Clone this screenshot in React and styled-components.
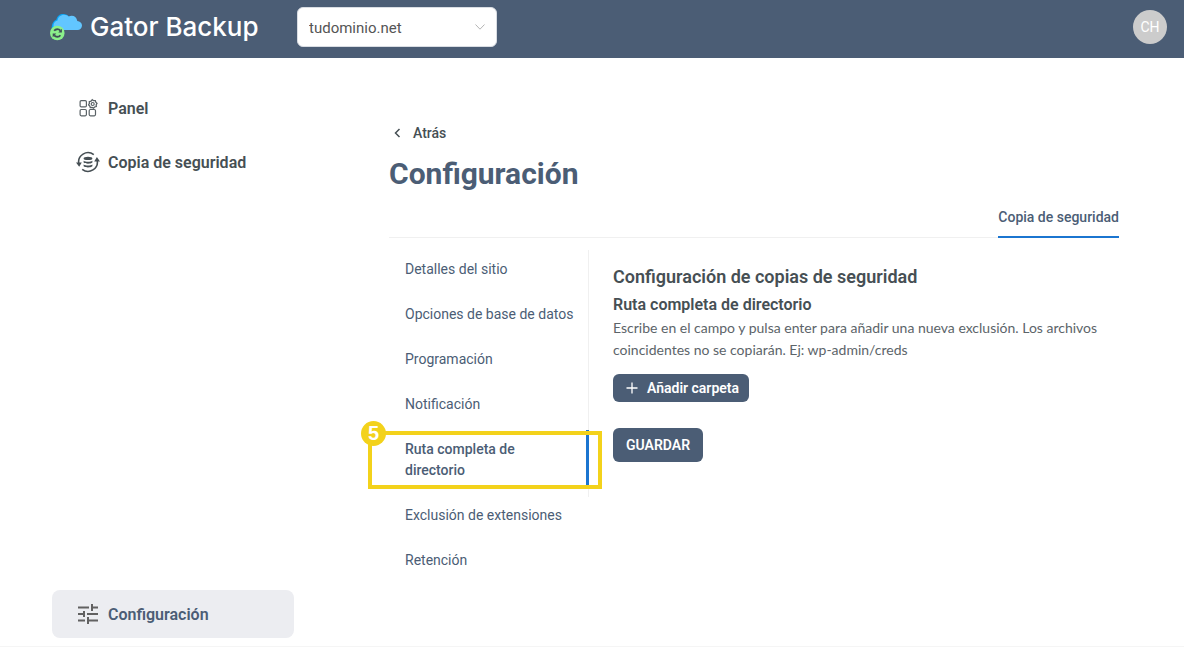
import React, { useState } from 'react'
import styled, { createGlobalStyle } from 'styled-components'

const navItems = [
    { id: 'panel', label: 'Panel', icon: <PanelIcon/> },
    { id: 'backup', label: 'Copia de seguridad', icon: <BackupIcon/> },
]

const sections = [
    'Detalles del sitio',
    'Opciones de base de datos',
    'Programación',
    'Notificación',
    'Ruta completa de directorio',
    'Exclusión de extensiones',
    'Retención',
]

function App() {
    const [section, setSection] = useState('Ruta completa de directorio');
    return (
        <Page>
            <GlobalStyle/>
            <Header>
                <Logo href="#">
                    <LogoIcon/>
                    Gator Backup
                </Logo>
                <DomainPicker>
                    <DomainSelect aria-label="Dominio">
                        <option>tudominio.net</option>
                    </DomainSelect>
                    <svg width="10" height="6" viewBox="0 0 10 6" fill="none" stroke="#b5b5b5">
                        <path d="M.5.5 5 5.200 9.500.5"/>
                    </svg>
                </DomainPicker>
                <Avatar type="button">CH</Avatar>
            </Header>
            <Body>
                <Sidebar>
                    <NavGroup>
                        {navItems.map(item => (
                            <NavLink key={item.id} href="#">{item.icon}{item.label}</NavLink>
                        ))}
                    </NavGroup>
                    <NavLink href="#" $active><TuneIcon/>Configuración</NavLink>
                </Sidebar>
                <Main>
                    <Back href="#">
                        <svg width="16" height="16" viewBox="0 0 16 16" fill="none" stroke="#464f54" strokeWidth="1.5">
                            <path d="M10.500 4 6.500 8l4 4"/>
                        </svg>
                        Atrás
                    </Back>
                    <Title>Configuración</Title>
                    <Tabs>
                        <Tab type="button">Copia de seguridad</Tab>
                    </Tabs>
                    <Columns>
                        <SectionList>
                            {sections.map(name => (
                                <SectionItem key={name}>
                                    <SectionButton type="button" $active={name===section} onClick={()=>setSection(name)}>
                                        {name}
                                    </SectionButton>
                                    {name==='Ruta completa de directorio' &&
                                        <Callout><Step>5</Step></Callout>
                                    }
                                </SectionItem>
                            ))}
                        </SectionList>
                        <Content>
                            <h2>Configuración de copias de seguridad</h2>
                            <h3>Ruta completa de directorio</h3>
                            <p>
                                Escribe en el campo y pulsa enter para añadir una nueva exclusión. Los archivos
                                coincidentes no se copiarán. Ej: wp-admin/creds
                            </p>
                            <AddButton type="button">
                                <svg width="12" height="12" viewBox="0 0 12 12" stroke="#fff" strokeWidth="1.300">
                                    <path d="M6 .5v11M.5 6h11"/>
                                </svg>
                                Añadir carpeta
                            </AddButton>
                            <SaveButton type="button">GUARDAR</SaveButton>
                        </Content>
                    </Columns>
                </Main>
            </Body>
        </Page>
    )
}

export default App

function LogoIcon() {
    return (
        <svg width="32" height="28" viewBox="0 0 32 28">
            <path d="M2 17C1 12 3 8 6.500 6.500 7 3 10 1 13 1c3 0 5 1 6 3l-4 13z" fill="#0ba5f5"/>
            <path d="M8 17c-3 0-5-2-4.500-5 .3-2.500 2-4 4-4.500C8 4 11 1.800 14 1.800c2 0 3.600.8 4.600 1.800 3.400-2 8-.5 8.700 4.400C30 8.200 32 10 32 12.500 32 15.200 30 17 27.500 17z" fill="#62c6ff"/>
            <circle cx="7.300" cy="20" r="7.300" fill="#8bf08b"/>
            <g fill="none" stroke="#3f4f57" strokeWidth="1.800">
                <path d="M4.200 17.800a4 4 0 0 1 6.200-.2M10.400 22.200a4 4 0 0 1-6.200.2"/>
            </g>
            <path d="M11.900 15.700v3.800H8.300zM2.700 24.300v-3.800h3.600z" fill="#3f4f57"/>
        </svg>
    )
}

function PanelIcon() {
    return (
        <svg width="24" height="24" viewBox="0 0 24 24" fill="none" stroke="#5a6266" strokeWidth="1.200">
            <rect x="4.100" y="4.600" width="6.300" height="6.300" rx="1.200"/>
            <rect x="4.100" y="13.500" width="6.300" height="6.300" rx="1.200"/>
            <rect x="13.200" y="13.500" width="6.300" height="6.300" rx="1.200"/>
            <g transform="translate(0 .5)">
                <path d="m16.300 3.200 1.300 1 1.700-.1.500 1.600 1.200 1.200-.8 1.400.1 1.700-1.700.5-1.100 1.200-1.500-.7-1.700.1-.5-1.600-1.200-1.200.8-1.500-.1-1.600 1.700-.5z" strokeWidth="1.300"/>
                <circle cx="16.700" cy="7.500" r="1.500"/>
            </g>
        </svg>
    )
}

function BackupIcon() {
    return (
        <svg width="24" height="24" viewBox="0 0 24 24">
            <g fill="none" stroke="#464f54" strokeWidth="1.600">
                <path d="M2.900 14A9.300 9.300 0 0 1 17.800 4.700"/>
                <path d="M21.100 10A9.300 9.300 0 0 1 6.200 19.300"/>
            </g>
            <path d="M0 12.500h5.800L3.200 16.800zM18.200 11.500H24L20.900 7z" fill="#464f54"/>
            <ellipse cx="12" cy="8.400" rx="4.400" ry="1.700" fill="#464f54"/>
            <path d="M7.600 10.800c2 1.400 6.800 1.400 8.800 0v1.800c-2 1.600-6.800 1.600-8.800 0zM7.600 14.400c2 1.400 6.800 1.400 8.800 0v1.800c-2 1.600-6.800 1.600-8.800 0z" fill="#464f54"/>
        </svg>
    )
}

function TuneIcon() {
    return (
        <svg width="24" height="24" viewBox="0 0 24 24" fill="none" stroke="#616161" strokeWidth="2">
            <path d="M2 5.500h11M16 2v7M16 5.500h6M2 12h6M8 9v6M11 12h11M2 18.500h7M12 15v7M12 18.500h10"/>
        </svg>
    )
}

const GlobalStyle = createGlobalStyle`
    * {
        box-sizing: border-box;
    }

    body {
        margin: 0;
        background: #fff;
        color: #464f54;
        font-family: Roboto, "Liberation Sans", sans-serif;
    }

    button, select {
        font-family: inherit;
    }

    a {
        color: inherit;
        text-decoration: none;
    }
`

const Page = styled.div`
    min-height: 100vh;
    display: flex;
    flex-direction: column;
    border-bottom: 1px solid #f5f5f5;
`

const Header = styled.header`
    display: flex;
    align-items: center;
    padding: 7px 17px 11px 50px;
    background: #4b5d75;
`

const Logo = styled.a`
    width: 247px;
    display: flex;
    align-items: center;
    gap: 8px;
    color: #fff;
    font-family: Inter, sans-serif;
    font-size: 26px;
    font-weight: 500;
    line-height: 32px;
    white-space: nowrap;
`

const DomainPicker = styled.div`
    position: relative;
    width: 200px;

    > svg {
        position: absolute;
        top: 17px;
        right: 12px;
        pointer-events: none;
    }
`

const DomainSelect = styled.select`
    appearance: none;
    width: 100%;
    height: 40px;
    padding: 2px 11px 0;
    border: 1px solid #d9dde3;
    border-radius: 6px;
    background: #fff;
    color: #555;
    font-size: 15px;
`

const Avatar = styled.button`
    width: 34px;
    height: 34px;
    margin-left: auto;
    padding: 0;
    border: 0;
    border-radius: 50%;
    background: #ccc;
    color: #fff;
    font-size: 14px;
`

const Body = styled.div`
    flex: 1;
    display: flex;
`

const Sidebar = styled.nav`
    width: 242px;
    flex-shrink: 0;
    margin-left: 52px;
    padding: 26px 0 8px;
    display: flex;
    flex-direction: column;
    justify-content: space-between;
`

const NavGroup = styled.div`
    display: flex;
    flex-direction: column;
    gap: 6px;
`

const NavLink = styled.a`
    height: 48px;
    display: flex;
    align-items: center;
    gap: 8px;
    padding: 0 24px;
    border-radius: 8px;
    background: ${props => props.$active ? '#ecedf1' : 'transparent'};
    color: ${props => props.$active ? '#4b5d75' : '#464f54'};
    font-size: 16px;
    font-weight: 600;
`

const Main = styled.main`
    flex: 1;
    margin: 64px 65px 32px 95px;
`

const Back = styled.a`
    display: inline-flex;
    align-items: center;
    gap: 8px;
    font-size: 14px;
    line-height: 22px;
    font-weight: 500;
`

const Title = styled.h1`
    margin: 9px 0 12px;
    color: #4b5d75;
    font-size: 30px;
    line-height: 40px;
    font-weight: 700;
`

const Tabs = styled.div`
    display: flex;
    justify-content: flex-end;
    border-bottom: 1px solid #f0f0f0;
`

const Tab = styled.button`
    margin-bottom: -1px;
    padding: 0 0 8px;
    border: 0;
    border-bottom: 2px solid #1b75d0;
    background: none;
    color: #4b5d75;
    font-size: 14px;
    line-height: 22px;
    font-weight: 500;
`

const Columns = styled.div`
    display: flex;
    align-items: flex-start;
    padding-top: 12px;
`

const SectionList = styled.ul`
    width: 200px;
    flex-shrink: 0;
    display: flex;
    flex-direction: column;
    gap: 8px;
    margin: 0 -1px 0 0;
    padding: 0;
    list-style: none;
    z-index: 1;
`

const SectionItem = styled.li`
    position: relative;
`

const SectionButton = styled.button`
    width: 100%;
    padding: 9px 10px 7px 16px;
    border: 0;
    border-right: 3px solid ${props => props.$active ? '#1b75d0' : 'transparent'};
    background: none;
    color: #4b5d75;
    font-size: 14px;
    line-height: 21px;
    font-weight: ${props => props.$active ? 500 : 400};
    text-align: left;
    cursor: pointer;
`

const Callout = styled.div`
    position: absolute;
    inset: 1px -13px -1px -21px;
    border: 4px solid #f3d21b;
    pointer-events: none;
`

const Step = styled.span`
    position: absolute;
    top: -14px;
    left: -11px;
    width: 25px;
    height: 25px;
    border-radius: 50%;
    background: #f3d21b;
    color: #fff;
    font-family: "Liberation Sans", sans-serif;
    font-size: 20px;
    line-height: 24px;
    font-weight: 700;
    text-align: center;
`

const Content = styled.section`
    flex: 1;
    display: flex;
    flex-direction: column;
    align-items: flex-start;
    padding: 13px 0 35px 24px;
    border-left: 1px solid #f0f0f0;

    > h2 {
        margin: 0;
        font-size: 18px;
        line-height: 28px;
        font-weight: 600;
    }

    > h3 {
        margin: 3px 0 1px;
        font-size: 16px;
        line-height: 22px;
        font-weight: 600;
    }

    > p {
        margin: 0 0 13px;
        color: #5c6469;
        font-family: Lato, sans-serif;
        font-size: 14px;
        line-height: 22px;
    }
`

const AddButton = styled.button`
    height: 28px;
    display: flex;
    align-items: center;
    gap: 9px;
    padding: 0 10px 0 13px;
    border: 0;
    border-radius: 6px;
    background: #4b5d75;
    color: #fff;
    font-size: 14px;
    font-weight: 600;
`

const SaveButton = styled.button`
    height: 34px;
    margin-top: 26px;
    padding: 0 13px;
    border: 0;
    border-radius: 6px;
    background: #4b5d75;
    color: #fff;
    font-size: 14px;
    font-weight: 600;
`
